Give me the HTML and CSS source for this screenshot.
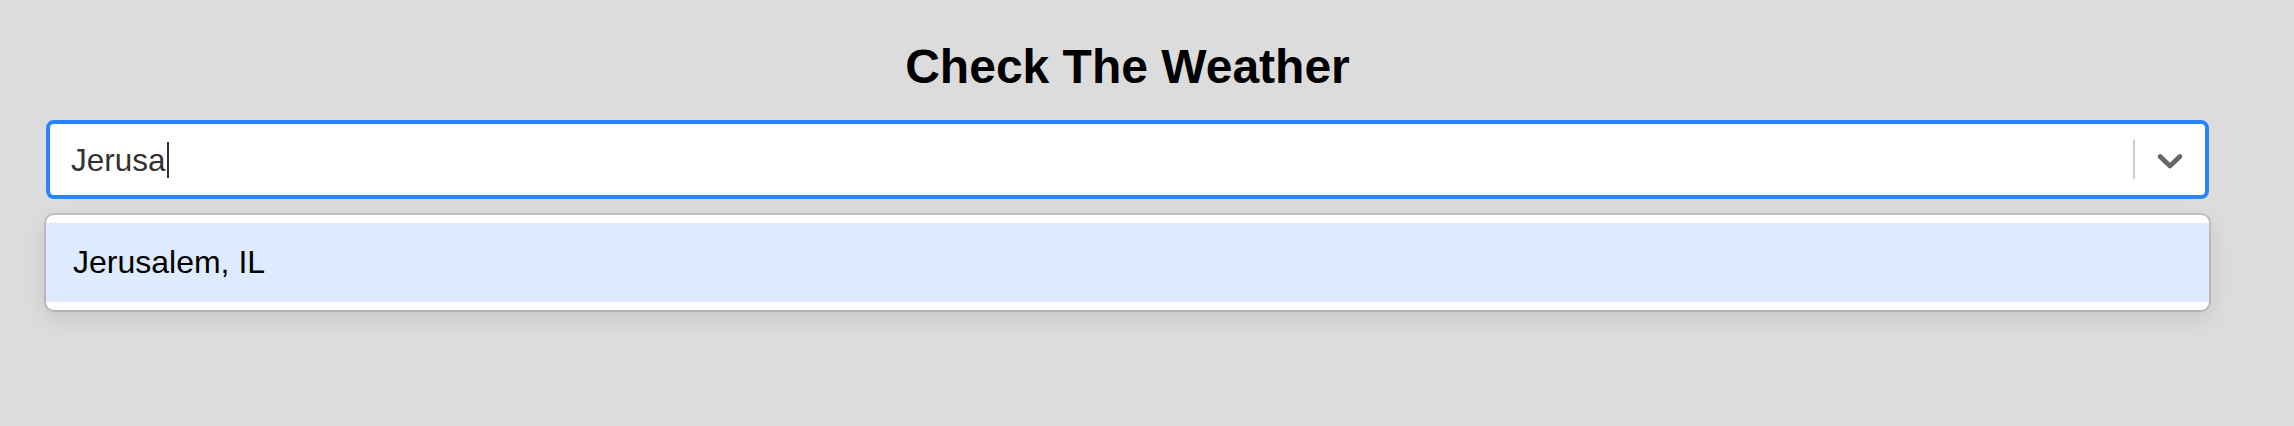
FILE: index.html
```html
<!DOCTYPE html>
<html lang="en">
<head>
<meta charset="utf-8">
<title>Check The Weather</title>
<link rel="stylesheet" href="styles.css">
</head>
<body>
<div class="app">
  <h1 class="title">Check The Weather</h1>
  <div class="select">
    <div class="control">
      <div class="value">
        <span class="value-text">Jerusa</span><span class="caret"></span>
      </div>
      <span class="separator"></span>
      <div class="indicator">
        <svg class="chevron" viewBox="0 0 20 20" width="42" height="42" aria-hidden="true">
          <path d="M4.516 7.548c0.436-0.446 1.043-0.481 1.576 0l3.908 3.747 3.908-3.747c0.533-0.481 1.141-0.446 1.574 0 0.436 0.445 0.408 1.197 0 1.615-0.406 0.418-4.695 4.502-4.695 4.502-0.217 0.223-0.502 0.335-0.787 0.335s-0.57-0.112-0.789-0.335c0 0-4.287-4.084-4.695-4.502s-0.436-1.17 0-1.615z"></path>
        </svg>
      </div>
    </div>
    <div class="menu">
      <div class="option is-focused">Jerusalem, IL</div>
    </div>
  </div>
</div>
</body>
</html>
```

FILE: styles.css
```css
html, body {
  margin: 0;
  padding: 0;
}
body {
  background: #dcdcdc;
  font-family: "Liberation Sans", Arial, Helvetica, sans-serif;
  width: 2294px;
  height: 426px;
  overflow: hidden;
}
.app {
  width: 2163px;
  margin-left: 46px;
  padding-top: 40px;
}
.title {
  margin: 0 0 27px 0;
  text-align: center;
  font-size: 48px;
  line-height: 53px;
  font-weight: bold;
  color: #000;
}
.select {
  position: relative;
}
.control {
  box-sizing: border-box;
  height: 79px;
  display: flex;
  align-items: center;
  background: #fff;
  border: 4px solid #2684ff;
  border-radius: 8px;
}
.value {
  flex: 1;
  display: flex;
  align-items: center;
  padding: 0 21px;
  font-size: 31.5px;
  line-height: 36px;
  color: #333;
}
.caret {
  display: inline-block;
  width: 2px;
  height: 36px;
  background: #333;
  margin-left: 1px;
}
.separator {
  align-self: stretch;
  width: 2px;
  margin: 16px 0;
  background: #cccccc;
}
.indicator {
  display: flex;
  align-items: center;
  padding: 0 14px;
}
.chevron {
  display: block;
  fill: #666;
}
.menu {
  margin-top: 16px;
  background: #fff;
  border-radius: 8px;
  padding: 8px 0;
  box-shadow: 0 0 0 2px rgba(0, 0, 0, 0.12), 0 8px 23px rgba(0, 0, 0, 0.1);
}
.option {
  padding: 22px 27px;
  font-size: 32px;
  line-height: 35px;
  color: #000;
}
.option.is-focused {
  background: #deebff;
}
```
